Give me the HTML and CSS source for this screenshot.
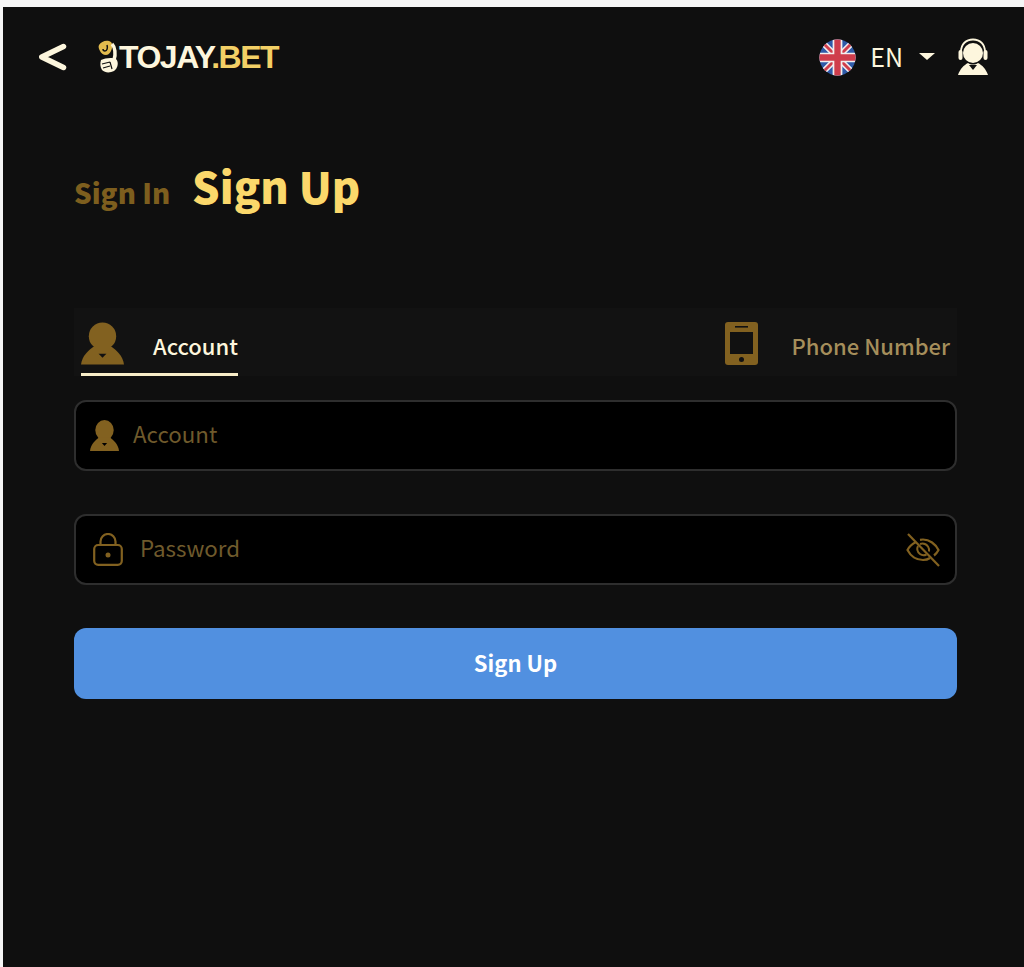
FILE: index.html
```html
<!DOCTYPE html>
<html lang="en">
<head>
    <meta charset="UTF-8">
    <meta name="viewport" content="width=device-width, initial-scale=1.0">
    <title>Sign Up</title>
    <link rel="stylesheet" href="styles.css">
</head>
<body>

<div class="app">
    <div class="topbar">
        <svg class="back" viewBox="0 0 28 28" width="28" height="28"><path d="M24.500 3.500 2.800 14l21.700 10.500" fill="none" stroke="#fdf6dd" stroke-width="5.500" stroke-linecap="round" stroke-linejoin="round"/></svg>
        <div class="logo">
            <svg class="logo-mark" viewBox="0 0 24 34" width="24" height="34">
                <path d="M2 5c2-3 6-5 10-4 3 1 4 4 3 7-1 4-3 7-6 7-3 0-5-2-6-4-1-2-2-4-1-6z" fill="#e2bb4e"/>
                <path d="M10 5c1 3 0 6-2 6-1 0-2-1-2-2" fill="none" stroke="#111" stroke-width="1.500"/>
                <path d="M15 4c3 3 4 10 2 16" fill="none" stroke="#fdf6dd" stroke-width="3.500"/>
                <path d="M4 20c4-2 11-3 15-1 3 3 2 9-2 12-4 2-9 2-12-1-2-3-2-7-1-10z" fill="#fdf6dd"/>
                <path d="M5 24l8-2M6 28l7-2M13 22l2 7" stroke="#111" stroke-width="1.200" fill="none"/>
            </svg>
            <span class="logo-text">TOJAY<span class="logo-bet">.BET</span></span>
        </div>
        <div class="topbar-right">
            <svg class="flag" viewBox="0 0 38 38" width="37" height="37">
                <defs><clipPath id="round"><circle cx="19" cy="19" r="18.500"/></clipPath></defs>
                <g clip-path="url(#round)">
                    <rect width="38" height="38" fill="#2f5aa8"/>
                    <path d="M0 0 38 38M38 0 0 38" stroke="#f3eeee" stroke-width="6"/>
                    <path d="M0 0 38 38M38 0 0 38" stroke="#cf3d4c" stroke-width="3"/>
                    <path d="M19 0v38M0 19h38" stroke="#f3eeee" stroke-width="10"/>
                    <path d="M19 0v38M0 19h38" stroke="#cf3d4c" stroke-width="6.500"/>
                </g>
            </svg>
            <span class="lang">EN</span>
            <span class="caret"></span>
            <svg class="agent" viewBox="0 0 32 38" width="32" height="38">
                <path d="M4 17v-3C4 6 9 1.500 16 1.500S28 6 28 14v3" fill="none" stroke="#fdf6dd" stroke-width="1.800"/>
                <rect x="1.500" y="12" width="4" height="10" rx="2" fill="#fdf6dd"/>
                <rect x="26.500" y="12" width="4" height="10" rx="2" fill="#fdf6dd"/>
                <circle cx="16" cy="15" r="10" fill="#fdf6dd"/>
                <path d="M11 25c3 2 7 2 10 0 4 2 8 6 10 12H1c2-6 6-10 10-12z" fill="#fdf6dd"/>
                <path d="M12 27h8l-4 5z" fill="#0f0f0f"/>
            </svg>
        </div>
    </div>

    <div class="content">
        <div class="title-row">
            <span class="title-off">Sign In</span>
            <span class="title-on">Sign Up</span>
        </div>

        <div class="tabs">
            <div class="tab tab-active">
                <svg class="tab-icon" viewBox="0 0 44 43" width="43" height="43">
                    <circle cx="22" cy="14" r="14" fill="#826120"/>
                    <path d="M14 24C8 28 1 34 0 43h44c-1-9-8-15-14-19z" fill="#826120"/>
                    <path d="M18 32h8l-4 4z" fill="#111"/>
                </svg>
                <span>Account</span>
            </div>
            <div class="tab tab-phone">
                <svg class="tab-icon" viewBox="0 0 33 43" width="33" height="43">
                    <rect width="33" height="43" rx="3" fill="#826120"/>
                    <rect x="5" y="10" width="23" height="22" fill="#111"/>
                    <rect x="10" y="4" width="13" height="1.600" fill="#111"/>
                    <circle cx="16.500" cy="37.500" r="2.500" fill="#111"/>
                </svg>
                <span>Phone Number</span>
            </div>
        </div>

        <div class="field field-account">
            <svg viewBox="0 0 44 43" width="29" height="31" preserveAspectRatio="none">
                <circle cx="22" cy="14" r="14" fill="#826120"/>
                <path d="M14 24C8 28 1 34 0 43h44c-1-9-8-15-14-19z" fill="#826120"/>
                <path d="M18 32h8l-4 4z" fill="#000"/>
            </svg>
            <span class="placeholder">Account</span>
        </div>

        <div class="field field-password">
            <svg viewBox="0 0 30 33" width="30" height="33">
                <rect x="1.200" y="12" width="27.600" height="19.800" rx="4" fill="none" stroke="#826120" stroke-width="2.200"/>
                <path d="M7.500 12V8.500a7.500 7.500 0 0 1 15 0V12" fill="none" stroke="#826120" stroke-width="2.200"/>
                <circle cx="15" cy="22" r="2.500" fill="#826120"/>
            </svg>
            <span class="placeholder">Password</span>
            <svg class="eye" viewBox="0 0 34 34" width="34" height="34">
                <path d="M10 9C6 11 3 14 1.500 17c3 6 9 10 15.500 10 3 0 5-.6 7-2M14 6.800c1-.2 2-.3 3-.3 6.500 0 12.500 4.500 15.500 10.500-1 2-2.500 4-4.500 5.500" fill="none" stroke="#826120" stroke-width="2.200"/>
                <path d="M12 13c-1.500 3-.5 6 2 8 2 1.500 4.500 1.500 6.500.5M14 11c3-1 6 0 8 2.500 1 1.500 1.300 3 1 5" fill="none" stroke="#826120" stroke-width="2"/>
                <path d="M2 1l31 32" stroke="#826120" stroke-width="2.200"/>
            </svg>
        </div>

        <button class="submit">Sign Up</button>
    </div>
</div>

</body>
</html>
```

FILE: styles.css
```css
body {
    font-family: "Noto Sans CJK SC", "Noto Sans", sans-serif;
    margin: 0;
    padding: 7px 0 0 3px;
    background-color: #f6f6f6;
    height: 967px;
    box-sizing: border-box;
    overflow: hidden;
}
.app {
    background-color: #0f0f0f;
    height: 960px;
}
.topbar {
    display: flex;
    align-items: center;
    height: 100px;
    padding: 0 35px 0 36px;
}
.back {
    display: block;
}
.logo {
    display: flex;
    align-items: center;
    margin-left: 30px;
}
.logo-mark {
    display: block;
    margin-right: -2px;
}
.logo-text {
    font-family: "Liberation Sans", Arial, sans-serif;
    font-weight: bold;
    font-size: 32px;
    letter-spacing: -1.500px;
    color: #fdf6dd;
}
.logo-bet {
    color: #f3d066;
}
.topbar-right {
    display: flex;
    align-items: center;
    margin-left: auto;
}
.lang {
    margin: -3px 0 0 14px;
    font-size: 25px;
    color: #fdf6dd;
}
.caret {
    margin: -2px 0 0 16px;
    border-left: 8px solid transparent;
    border-right: 8px solid transparent;
    border-top: 7px solid #fdf6dd;
}
.agent {
    margin-left: 22px;
}
.content {
    padding: 0 67px 0 71px;
}
.title-row {
    display: flex;
    align-items: baseline;
    gap: 22px;
    margin-top: 47px;
    height: 62px;
}
.title-off {
    font-size: 27.700px;
    font-weight: 900;
    color: #7d5e1e;
}
.title-on {
    font-size: 43.300px;
    font-weight: 900;
    color: #fbd86b;
}
.tabs {
    display: flex;
    justify-content: space-between;
    height: 68px;
    margin-top: 92px;
    padding: 0 7px;
    background-color: #121212;
}
.tab {
    display: flex;
    align-items: center;
    gap: 28px;
    height: 68px;
    box-sizing: border-box;
    padding-top: 8px;
    font-size: 22px;
    font-weight: 500;
    color: #a58e5b;
}
.tab-phone {
    gap: 34px;
}
.tab-phone span {
    margin-top: -2px;
}
.tab-active {
    gap: 29px;
    color: #fdf6dd;
    border-bottom: 3px solid #f8edc8;
}
.tab-icon {
    display: block;
    margin-top: -6px;
}
.tab-active .tab-icon {
    margin-top: -2px;
}
.field {
    display: flex;
    align-items: center;
    height: 71px;
    box-sizing: border-box;
    background-color: #000;
    border: 2px solid #2e2e2e;
    border-radius: 12px;
}
.field-account {
    margin-top: 24px;
    padding-left: 14px;
    gap: 14px;
}
.field-password {
    margin-top: 43px;
    padding: 0 15px 0 17px;
    gap: 17px;
}
.placeholder {
    margin-top: -6px;
    font-size: 22.300px;
    color: #6f5a2c;
}
.eye {
    margin-left: auto;
}
.submit {
    display: block;
    width: 100%;
    height: 71px;
    margin-top: 43px;
    padding-bottom: 5px;
    border: 0;
    border-radius: 12px;
    background-color: #5190e0;
    color: #fff;
    font-family: inherit;
    font-size: 22px;
    font-weight: bold;
}
```
